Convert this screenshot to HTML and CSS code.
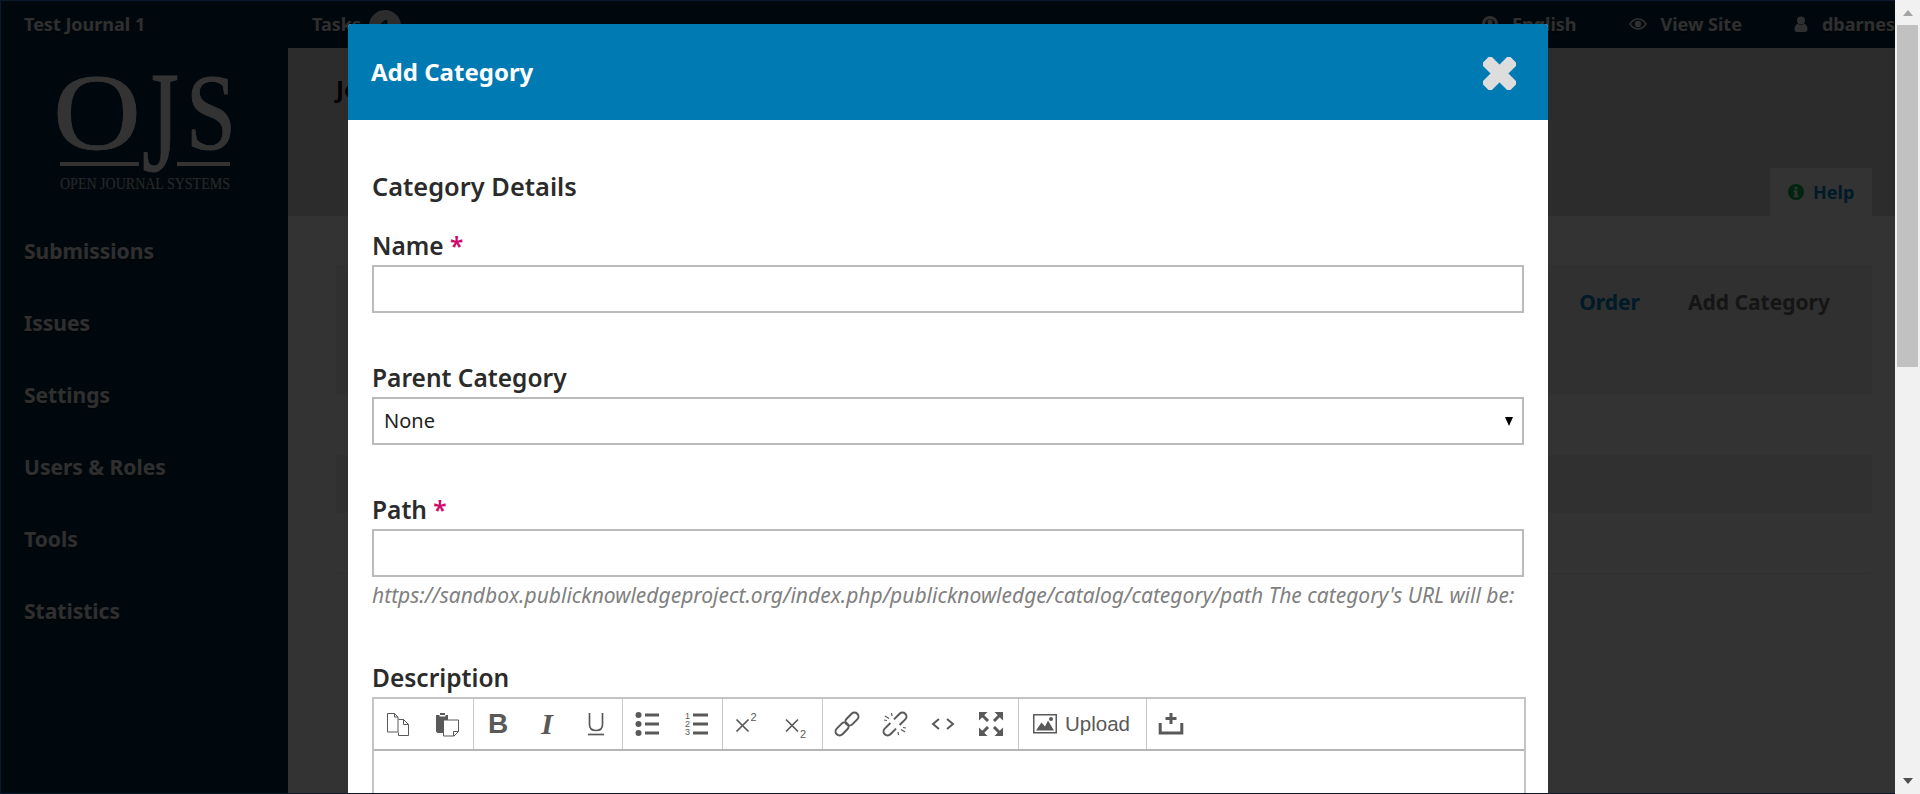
FILE: index.html
```html
<!DOCTYPE html>
<html lang="en">
  <head>
    <meta charset="UTF-8" />
    <meta name="viewport" content="width=device-width, initial-scale=1.0" />
    <title>Add Category</title>
    <link rel="stylesheet" href="styles.css">
  </head>
  <body>
    <div class="viewport">
      <header class="topbar">
        <div class="journal-name">Test Journal 1</div>
        <div class="tasks">Tasks <span class="tasks-count">1</span></div>
        <nav class="user-nav">
          <span class="user-link">
            <svg class="nav-icon nav-icon-globe" viewBox="0 0 16 16"><circle cx="8" cy="8" r="6.500" fill="none" stroke="currentColor" stroke-width="3" /><circle cx="8" cy="6" r="2.500" fill="currentColor" /></svg>
            English
          </span>
          <span class="user-link">
            <svg class="nav-icon nav-icon-eye" viewBox="0 0 18 12"><path d="M1 6c2-3 5-5 8-5s6 2 8 5c-2 3-5 5-8 5S3 9 1 6z" fill="none" stroke="currentColor" stroke-width="1.600" /><circle cx="9" cy="6" r="3.200" fill="currentColor" /></svg>
            View Site
          </span>
          <span class="user-link">
            <svg class="nav-icon" viewBox="0 0 14 16"><circle cx="7" cy="4.500" r="4" fill="currentColor" /><path d="M0.500 13c0-3 1.500-5 3.500-5 1.800 1.200 4.200 1.200 6 0 2 0 3.500 2 3.500 5 0 1.800-1 3-2.500 3H3c-1.500 0-2.500-1.200-2.500-3z" fill="currentColor" /></svg>
            dbarnes
          </span>
        </nav>
      </header>

      <div class="layout">
        <aside class="sidebar">
          <svg class="logo" viewBox="0 0 180 125">
            <text class="logo-letter" x="-5" y="77" textLength="88" lengthAdjust="spacingAndGlyphs">O</text>
            <text class="logo-letter logo-letter-j" x="84" y="99" textLength="37" lengthAdjust="spacingAndGlyphs">J</text>
            <text class="logo-letter" x="128" y="77" textLength="50" lengthAdjust="spacingAndGlyphs">S</text>
            <rect x="2" y="90" width="79" height="4" />
            <rect x="119" y="90" width="53" height="4" />
            <text class="logo-sub" x="2" y="117" textLength="170" lengthAdjust="spacingAndGlyphs">OPEN JOURNAL SYSTEMS</text>
          </svg>
          <ul class="side-menu">
            <li>Submissions</li>
            <li>Issues</li>
            <li>Settings</li>
            <li>Users &amp; Roles</li>
            <li>Tools</li>
            <li>Statistics</li>
          </ul>
        </aside>

        <main class="content">
          <div class="page-head">
            <h1>Journal</h1>
            <div class="help-tab">
              <svg class="help-icon" viewBox="0 0 16 16"><circle cx="8" cy="8" r="8" fill="#00b24e" /><rect x="6.500" y="2.800" width="3" height="2.600" fill="#fff" /><path d="M5.500 6.500h4v5h1.200v1.800H5.500v-1.800h1V8.300h-1z" fill="#fff" /></svg>
              Help
            </div>
          </div>
          <section class="grid-card">
            <div class="grid-head">
              <a class="grid-action grid-order">Order</a>
              <a class="grid-action">Add Category</a>
            </div>
            <div class="grid-row"></div>
            <div class="grid-row grid-row-alt"></div>
            <div class="grid-row"></div>
          </section>
        </main>
      </div>

      <div class="overlay">
        <div class="modal">
          <div class="modal-head">
            <h2>Add Category</h2>
            <svg class="close-icon" viewBox="0 0 34 34">
              <rect x="-3" y="10.500" width="40" height="13" rx="2.500" transform="rotate(45 17 17)" />
              <rect x="-3" y="10.500" width="40" height="13" rx="2.500" transform="rotate(-45 17 17)" />
            </svg>
          </div>

          <form class="modal-body">
            <h3>Category Details</h3>

            <div class="field">
              <label for="name">Name <span class="req">*</span></label>
              <input type="text" id="name" />
            </div>

            <div class="field">
              <label for="parent">Parent Category</label>
              <div class="select-wrap">
                <select id="parent"><option>None</option></select>
              </div>
            </div>

            <div class="field">
              <label for="path">Path <span class="req">*</span></label>
              <input type="text" id="path" />
              <div class="hint">https://sandbox.publicknowledgeproject.org/index.php/publicknowledge/catalog/category/path The category's URL will be:</div>
            </div>

            <div class="field">
              <label>Description</label>
              <div class="editor">
                <div class="toolbar">
                  <div class="tool-group">
                    <span class="tool">
                      <svg viewBox="0 0 24 24" class="line-icon"><path d="M1.500 1.500h7l3.500 3.500v15h-10.500z" /><path d="M8.500 1.500v3.500h3.500" /><path d="M12.500 7.500h5l5 5v11h-10v-3" /><path d="M17.500 7.500v5h5" /></svg>
                    </span>
                    <span class="tool">
                      <svg viewBox="0 0 24 24" class="fill-icon"><path d="M1 3h4V1h5v2h3v5H8v13H2.500L1 19.500z" /><rect x="4.500" y="3" width="6" height="1.500" fill="#fff" /><path d="M8.500 8h15v11.500l-4.500 4.500h-10.500z" fill="#fff" stroke="#595959" /><path d="M23 19.500h-4.500v4.500" fill="none" stroke="#595959" /></svg>
                    </span>
                  </div>
                  <div class="tool-group">
                    <span class="tool tool-bold">B</span>
                    <span class="tool tool-italic">I</span>
                    <span class="tool">
                      <svg viewBox="0 0 24 24" class="line-icon line-heavy"><path d="M5.500 1v11.500c0 4 2.500 6 6.500 6s6.500-2 6.500-6V1" /><path d="M4 22.500h16" /></svg>
                    </span>
                  </div>
                  <div class="tool-group">
                    <span class="tool">
                      <svg viewBox="0 0 24 24" class="fill-icon"><circle cx="3.500" cy="3" r="3" /><circle cx="3.500" cy="12" r="3" /><circle cx="3.500" cy="21" r="3" /><rect x="10" y="1.500" width="14" height="3" /><rect x="10" y="10.500" width="14" height="3" /><rect x="10" y="19.500" width="14" height="3" /></svg>
                    </span>
                    <span class="tool">
                      <svg viewBox="0 0 24 24" class="fill-icon"><text class="tiny" x="1" y="7">1</text><text class="tiny" x="1" y="15">2</text><text class="tiny" x="1" y="23">3</text><rect x="9" y="1.500" width="15" height="3" /><rect x="9" y="10.500" width="15" height="3" /><rect x="9" y="19.500" width="15" height="3" /></svg>
                    </span>
                  </div>
                  <div class="tool-group">
                    <span class="tool">
                      <svg viewBox="0 0 24 24" class="line-icon line-heavy"><path d="M1.500 7.500l12 12M13.500 7.500l-12 12" /><text class="tiny tiny-fill" x="15.500" y="8.500">2</text></svg>
                    </span>
                    <span class="tool">
                      <svg viewBox="0 0 24 24" class="line-icon line-heavy"><path d="M2 7.500l12 12M14 7.500l-12 12" /><text class="tiny tiny-fill" x="16" y="25.500">2</text></svg>
                    </span>
                  </div>
                  <div class="tool-group tool-group-tight">
                    <span class="tool">
                      <svg viewBox="0 0 24 24" class="line-icon line-chain"><g transform="rotate(-45 12 12)"><rect x="-2.500" y="8" width="15" height="8" rx="4" /><rect x="11.500" y="8" width="15" height="8" rx="4" /></g></svg>
                    </span>
                    <span class="tool">
                      <svg viewBox="0 0 24 24" class="line-icon line-chain"><g transform="rotate(-45 12 12)"><path d="M9.500 8H1.500a4 4 0 0 0 0 8h8" /><path d="M14.500 8h8a4 4 0 0 1 0 8h-8" /></g><path class="tick" d="M2 4l4 2.500M8.500 1l.5 3M1 8l3 .5M22 20l-4-2.500M15.500 23l-.5-3M23 16l-3-.5" /></svg>
                    </span>
                    <span class="tool">
                      <svg viewBox="0 0 24 24" class="line-icon line-code"><path d="M8 7l-6 5 6 5M16 7l6 5-6 5" /></svg>
                    </span>
                    <span class="tool">
                      <svg viewBox="0 0 24 24" class="fill-icon"><path d="M0 0h8.500L0 8.500zM24 0v8.500L15.500 0zM0 24v-8.500L8.500 24zM24 24h-8.500l8.500-8.500z" /><path d="M3 3l6 6M21 3l-6 6M3 21l6-6M21 21l-6-6" stroke="#595959" stroke-width="3" /></svg>
                    </span>
                  </div>
                  <div class="tool-group">
                    <span class="tool tool-upload">
                      <svg viewBox="0 0 24 20" class="upload-icon"><rect x="0.750" y="0.750" width="22.500" height="18" fill="none" stroke="#595959" stroke-width="1.500" /><path d="M3 16.500l5.500-8 3.500 4 3-6 6 10z" fill="#595959" /><circle cx="18" cy="5" r="2" fill="#595959" /></svg>
                      Upload
                    </span>
                  </div>
                  <div class="tool-group tool-group-last">
                    <span class="tool">
                      <svg viewBox="0 0 24 24" class="line-icon line-thick"><path d="M12 1v11M6.500 6.500h11" /><path d="M1.200 11v10h21.600V11" /></svg>
                    </span>
                  </div>
                </div>
                <div class="editor-area"></div>
              </div>
            </div>
          </form>
        </div>
      </div>
    </div>

    <div class="scrollbar">
      <span class="arrow arrow-up"></span>
      <div class="scroll-track"><div class="scroll-thumb"></div></div>
      <span class="arrow arrow-down"></span>
    </div>
  </body>
</html>
```

FILE: styles.css
```css
html,
body {
  height: 100%;
  overflow: hidden;
}

body {
  font-family: "Noto Sans", Arial, sans-serif;
  margin: 0;
  padding: 0;
  display: flex;
  background-color: #fff;
  color: #333;
}

.viewport {
  position: relative;
  flex: 1;
  min-width: 0;
  height: 794px;
  overflow: hidden;
  display: flex;
  flex-direction: column;
  background-color: #fff;
}

/* thin navy edge round the dimmed page */
.viewport::after {
  content: "";
  position: absolute;
  inset: 0;
  border: 1px solid #0a1a2c;
  border-right: 0;
  pointer-events: none;
}

/* top bar */
.topbar {
  flex: none;
  height: 48px;
  display: flex;
  align-items: center;
  background-color: #002c46;
  color: #e8e8e8;
  font-size: 18px;
  font-weight: 700;
  text-shadow: 0 2px 0 rgba(0, 0, 0, 0.5);
  white-space: nowrap;
}

.journal-name {
  width: 288px;
  padding-left: 24px;
  box-sizing: border-box;
}

.tasks {
  margin-left: 24px;
  display: flex;
  align-items: center;
  gap: 8px;
}

.tasks-count {
  width: 32px;
  height: 32px;
  margin-top: 4px;
  border-radius: 50%;
  background-color: #ddd;
  color: #002c46;
  text-align: center;
  line-height: 32px;
  text-shadow: none;
}

.user-nav {
  margin-left: auto;
  display: flex;
  gap: 52px;
}

.user-link {
  display: flex;
  align-items: center;
  gap: 14px;
}

.nav-icon {
  width: 14px;
  height: 16px;
}

.nav-icon-globe {
  width: 16px;
}

.nav-icon-eye {
  width: 18px;
  height: 12px;
}

/* sidebar and content */
.layout {
  flex: 1;
  display: flex;
  min-height: 0;
}

.sidebar {
  flex: none;
  width: 288px;
  background-color: #002c46;
}

.logo {
  display: block;
  width: 180px;
  height: 125px;
  margin: 24px 0 0 58px;
  fill: #fff;
  overflow: visible;
}

.logo-letter {
  font-family: "Liberation Serif", serif;
  font-size: 108px;
  stroke: #fff;
  stroke-width: 0.800;
}

.logo-letter-j {
  font-size: 145px;
}

.logo-sub {
  font-family: "Liberation Serif", serif;
  font-size: 16px;
  fill: #c8c8c8;
}

.side-menu {
  list-style: none;
  margin: 0;
  padding: 0;
  margin-top: 18px;
  color: #e8e8e8;
  font-size: 21px;
  font-weight: 700;
  text-shadow: 0 2px 0 rgba(0, 0, 0, 0.5);
}

.side-menu li {
  height: 72px;
  line-height: 72px;
  padding-left: 24px;
}

.content {
  flex: 1;
  min-width: 0;
}

.page-head {
  height: 168px;
  box-sizing: border-box;
  background-color: #ddd;
  position: relative;
  padding: 24px 48px 0;
}

.page-head h1 {
  margin: 0;
  font-size: 24px;
  color: #000;
}

.help-tab {
  position: absolute;
  right: 23px;
  bottom: 0;
  width: 102px;
  height: 48px;
  box-sizing: border-box;
  padding-left: 18px;
  display: flex;
  align-items: center;
  gap: 9px;
  background-color: #fff;
  border-radius: 3px 3px 0 0;
  color: #0080c0;
  font-size: 18px;
  font-weight: 700;
}

.help-icon {
  width: 16px;
  height: 16px;
}

.grid-card {
  margin: 49px 23px 0 48px;
  background-color: #fff;
  border-radius: 0 0 3px 3px;
  box-shadow: 0 1px 1px rgba(0, 0, 0, 0.1);
}

.grid-head {
  height: 130px;
  box-sizing: border-box;
  padding: 14px 42px 0 0;
  display: flex;
  justify-content: flex-end;
  align-items: flex-start;
  gap: 48px;
  background-color: #eee;
}

.grid-action {
  font-size: 21px;
  font-weight: 700;
  line-height: 46px;
  color: #6b6b6b;
}

.grid-order {
  color: #0080c0;
}

.grid-row {
  height: 60px;
}

.grid-row-alt {
  height: 58px;
  background-color: #eee;
}

/* modal */
.overlay {
  position: absolute;
  inset: 0;
  background-color: rgba(0, 0, 0, 0.8);
  padding-top: 24px;
}

.modal {
  width: 1200px;
  margin-left: 348px;
  background-color: #fff;
  border-radius: 3px 3px 0 0;
}

.modal-head {
  height: 96px;
  box-sizing: border-box;
  padding: 0 32px 0 23px;
  display: flex;
  align-items: center;
  justify-content: space-between;
  background-color: #007ab2;
  border-radius: 3px 3px 0 0;
}

.modal-head h2 {
  margin: 0 0 2px;
  font-size: 24px;
  font-weight: 700;
  color: #fff;
}

.close-icon {
  width: 33px;
  height: 33px;
  margin-top: 2px;
  fill: #ddd;
}

.modal-body {
  padding: 48px 22px 0 24px;
  color: #2b2b2b;
}

.modal-body h3 {
  margin: 0 0 31px;
  font-size: 25.400px;
  line-height: 36px;
  font-weight: 600;
}

.field {
  margin-bottom: 54px;
}

.field label {
  display: block;
  height: 30px;
  line-height: 21px;
  font-size: 24.500px;
  font-weight: 600;
}

.req {
  color: #d00a6c;
}

.field input,
.select-wrap select {
  display: block;
  width: 1152px;
  height: 48px;
  box-sizing: border-box;
  border: 2px solid #bbb;
  border-radius: 0;
  background-color: #fff;
  font-family: "Noto Sans", Arial, sans-serif;
  outline: none;
}

.select-wrap {
  position: relative;
  width: 1152px;
}

.select-wrap select {
  appearance: none;
  padding: 0 10px 2px;
  font-size: 20px;
  color: #222;
}

.select-wrap::after {
  content: "";
  position: absolute;
  right: 11px;
  top: 20px;
  border-left: 4.500px solid transparent;
  border-right: 4.500px solid transparent;
  border-top: 9px solid #000;
}

.hint {
  height: 36px;
  line-height: 36px;
  font-size: 21px;
  font-style: italic;
  color: #808080;
  white-space: nowrap;
}

/* rich text editor */
.editor {
  width: 1154px;
  box-sizing: border-box;
  border: 2px solid #c4c4c4;
  border-bottom: 0;
}

.toolbar {
  height: 48px;
  padding-bottom: 2px;
  display: flex;
  border-bottom: 2px solid #b5b5b5;
}

.tool-group {
  display: flex;
  gap: 1px;
  padding-right: 2px;
  margin-bottom: -2px;
  border-right: 1px solid #c8c8c8;
}

.tool-group-tight {
  gap: 0;
  padding-right: 3px;
}

.tool-group-last {
  border-right: 0;
}

.tool {
  width: 48px;
  display: flex;
  align-items: center;
  justify-content: center;
  color: #595959;
}

.tool svg {
  width: 24px;
  height: 24px;
  overflow: visible;
}

.line-icon {
  fill: none;
  stroke: #595959;
  stroke-width: 1;
}

.line-heavy {
  stroke-width: 1.700;
}

.line-chain {
  stroke-width: 2;
}

.tick {
  stroke-width: 1.200;
}

.line-thick {
  stroke-width: 3;
}

.line-code {
  stroke-width: 2;
}

.fill-icon {
  fill: #595959;
}

.tiny {
  font-family: "Liberation Sans", Arial, sans-serif;
  font-size: 9px;
}

.tiny-fill {
  fill: #595959;
  stroke: none;
  font-size: 11px;
}

.tool-bold {
  font-family: "Liberation Sans", Arial, sans-serif;
  font-size: 28px;
  font-weight: 700;
}

.tool-italic {
  font-family: "Liberation Serif", serif;
  font-size: 30px;
  font-weight: 700;
  font-style: italic;
}

.tool-upload {
  width: 125px;
  gap: 8px;
  font-family: "Liberation Sans", Arial, sans-serif;
  font-size: 20.500px;
}

.tool .upload-icon {
  width: 24px;
  height: 20px;
}

.editor-area {
  height: 200px;
}

/* scrollbar */
.scrollbar {
  flex: none;
  width: 25px;
  height: 794px;
  background-color: #f1f1f1;
  display: flex;
  flex-direction: column;
  align-items: center;
}

.arrow {
  flex: none;
  width: 0;
  height: 0;
  border-left: 5.500px solid transparent;
  border-right: 5.500px solid transparent;
}

.arrow-up {
  margin: 10px 0 9px;
  border-bottom: 6px solid #a3a3a3;
}

.arrow-down {
  margin: 9px 0 10px;
  border-top: 6px solid #505050;
}

.scroll-track {
  flex: 1;
  width: 21px;
}

.scroll-thumb {
  height: 342px;
  background-color: #c1c1c1;
}
```
